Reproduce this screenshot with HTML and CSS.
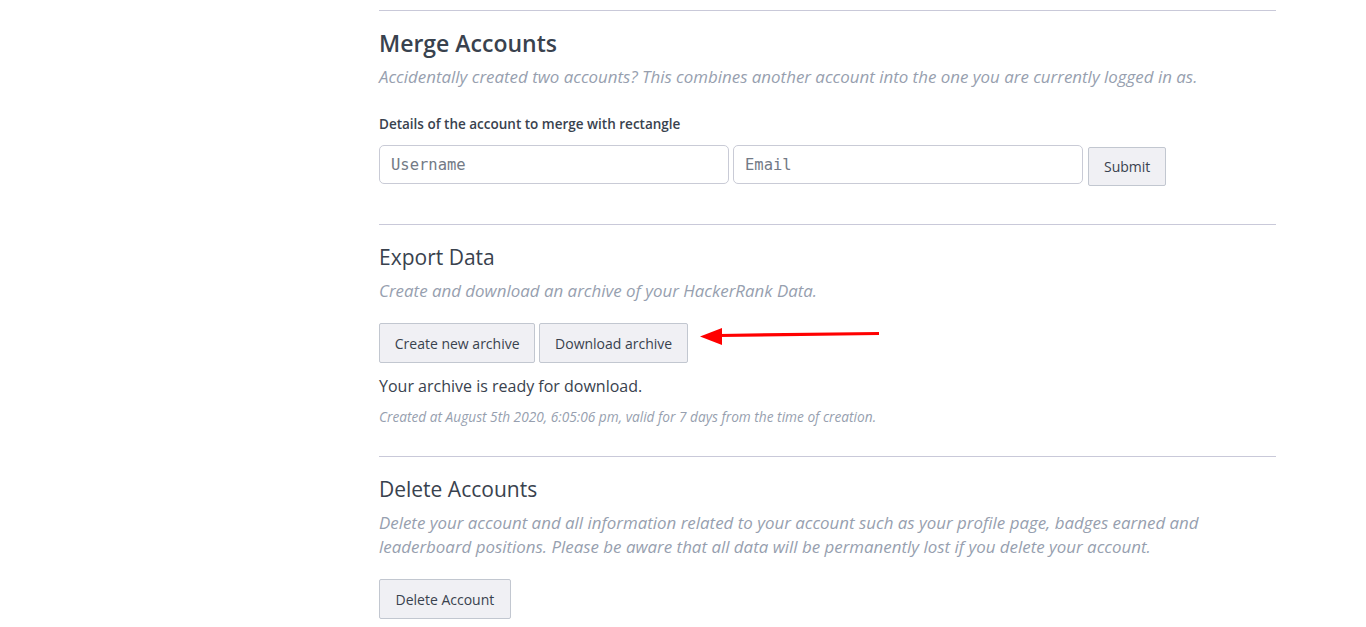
FILE: index.html
```html
<!DOCTYPE html>
<html lang="en">
<head>
<meta charset="utf-8">
<title>Settings</title>
<link rel="stylesheet" href="styles.css">
</head>
<body>
<div class="layout">
  <aside class="sidebar"></aside>
  <main class="content">
    <section class="section section-merge">
      <h2 class="title title-strong">Merge Accounts</h2>
      <p class="desc">Accidentally created two accounts? This combines another account into the one you are currently logged in as.</p>
      <label class="field-label">Details of the account to merge with rectangle</label>
      <form class="merge-form">
        <input class="input" type="text" placeholder="Username">
        <input class="input" type="text" placeholder="Email">
        <button class="btn btn-submit" type="button">Submit</button>
      </form>
    </section>
    <section class="section section-export">
      <h2 class="title">Export Data</h2>
      <p class="desc">Create and download an archive of your HackerRank Data.</p>
      <div class="btn-row">
        <button class="btn" type="button">Create new archive</button>
        <button class="btn" type="button">Download archive</button>
        <svg class="arrow" width="184" height="22" viewBox="0 0 184 22">
          <line x1="20" y1="9.5" x2="180" y2="7.5" stroke="#ff0000" stroke-width="3.2"/>
          <polygon points="1,10.5 23,2 23,19" fill="#ff0000"/>
        </svg>
      </div>
      <p class="status">Your archive is ready for download.</p>
      <p class="meta">Created at August 5th 2020, 6:05:06 pm, valid for 7 days from the time of creation.</p>
    </section>
    <section class="section">
      <h2 class="title">Delete Accounts</h2>
      <p class="desc">Delete your account and all information related to your account such as your profile page, badges earned and leaderboard positions. Please be aware that all data will be permanently lost if you delete your account.</p>
      <div class="btn-row">
        <button class="btn btn-delete" type="button">Delete Account</button>
      </div>
    </section>
  </main>
</div>
</body>
</html>
```
FILE: styles.css
```css
* { box-sizing: border-box; }
html, body { margin: 0; padding: 0; background: #fff; }
body {
  font-family: "Open Sans", "Liberation Sans", sans-serif;
  color: #39424e;
}
.layout {
  display: flex;
  padding-top: 10px;
}
.sidebar { width: 379px; flex: none; }
.content { width: 897px; flex: none; }
.section {
  border-top: 1px solid #c9c9d9;
  padding-top: 17px;
  padding-bottom: 31px;
}
.section-merge { padding-top: 16px; padding-bottom: 38px; }
.section-export { padding-bottom: 30px; }
.title {
  margin: 0;
  font-size: 21px;
  line-height: 30px;
  font-weight: 400;
  color: #39424e;
}
.title-strong {
  font-size: 23px;
  line-height: 32px;
  font-weight: 600;
}
.desc {
  margin: 7px 0 0;
  font-size: 16.9px;
  line-height: 24px;
  font-style: italic;
  color: #979faf;
}
.section-merge .desc { margin-top: 6px; }
.field-label {
  display: block;
  margin-top: 25px;
  font-size: 13.5px;
  line-height: 20px;
  font-weight: 600;
  color: #39424e;
}
.merge-form {
  display: flex;
  align-items: flex-start;
  gap: 4px;
  margin: 11px 0 0;
}
.input {
  width: 350px;
  height: 39px;
  padding: 0 11px;
  border: 1px solid #c9cbd6;
  border-radius: 5px;
  font-family: "DejaVu Sans Mono", "Liberation Mono", monospace;
  font-size: 15.5px;
  color: #39424e;
  background: #fff;
}
.input::placeholder { color: #737a86; }
.btn {
  height: 40px;
  padding: 0 14.75px;
  border: 1px solid #c2c7d0;
  border-radius: 2px;
  background: #f0f0f4;
  font-family: "Open Sans", "Liberation Sans", sans-serif;
  font-size: 14px;
  color: #39424e;
  cursor: pointer;
}
.btn-submit { height: 39px; margin-top: 2px; margin-left: 1px; padding: 0 15px; }
.btn-delete { padding: 0 15.5px; }
.btn-row {
  position: relative;
  display: flex;
  gap: 4px;
  margin-top: 20px;
}
.arrow {
  position: absolute;
  left: 320px;
  top: 3px;
}
.status {
  margin: 12px 0 0;
  font-size: 16px;
  line-height: 22px;
  color: #39424e;
}
.meta {
  margin: 11px 0 0;
  font-size: 13.7px;
  line-height: 18px;
  font-style: italic;
  color: #979faf;
}
```
